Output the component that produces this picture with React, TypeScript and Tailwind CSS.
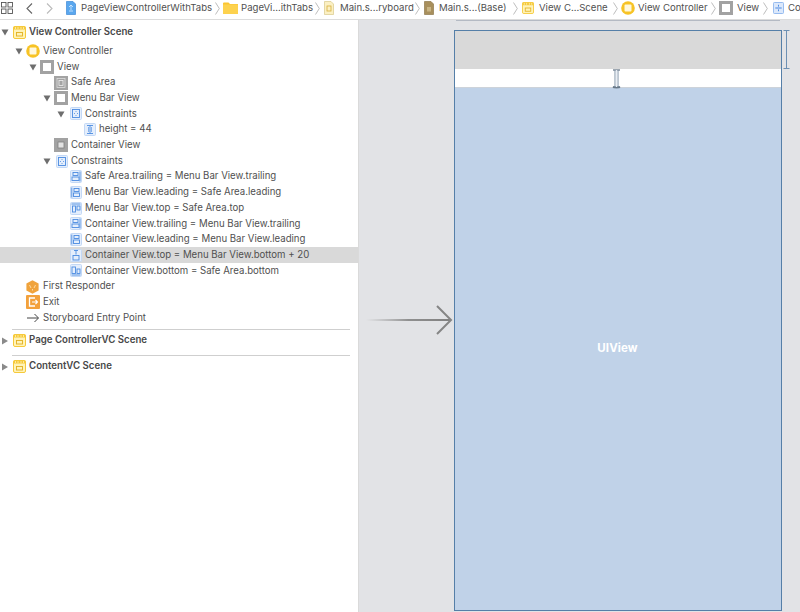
import React from "react";

const Tri = ({ open }: { open: boolean }) => (
  <svg width="8" height="8" viewBox="0 0 8 8" className="shrink-0">
    {open ? <path d="M0.5 1.5H7.5L4 7.5Z" fill="#6e6e6e" /> : <path d="M1 0.5V7.5L7 4Z" fill="#8a8a8a" />}
  </svg>
);

const SceneIcon = ({ s = 13 }: { s?: number }) => (
  <svg width={s} height={s} viewBox="0 0 13 13" className="shrink-0">
    <rect x="0.5" y="0.5" width="12" height="12" rx="1.5" fill="#fff3b8" stroke="#f6c93a" />
    <rect x="0.5" y="0.5" width="12" height="3" fill="#f6c93a" />
    <path d="M2.5 1v2M5 1v2M8 1v2M10.5 1v2" stroke="#fff3b8" strokeWidth="0.8" />
    <rect x="3.5" y="6.5" width="6" height="3.5" fill="none" stroke="#e2b021" strokeWidth="0.9" />
  </svg>
);
const VCIcon = ({ s = 14 }: { s?: number }) => (
  <svg width={s} height={s} viewBox="0 0 14 14" className="shrink-0">
    <circle cx="7" cy="7" r="6.8" fill="#f7c325" />
    <rect x="3.5" y="3.5" width="7" height="7" rx="1" fill="#fff8dc" />
  </svg>
);
const ViewIcon = ({ s = 14, small = false }: { s?: number; small?: boolean }) => (
  <svg width={s} height={s} viewBox="0 0 14 14" className="shrink-0">
    <rect width="14" height="14" fill="#a2a2a2" />
    {small ? (
      <rect x="4" y="4" width="6" height="6" fill="#e2e2e2" stroke="#808080" strokeWidth="0.8" />
    ) : (
      <rect x="3" y="3" width="8" height="8" fill="#ffffff" />
    )}
  </svg>
);
const SafeIcon = () => (
  <svg width="14" height="14" viewBox="0 0 14 14" className="shrink-0">
    <rect width="14" height="14" fill="#a3a3a3" />
    <rect x="3" y="2.5" width="8" height="9" fill="none" stroke="#dddddd" strokeWidth="0.8" />
    <rect x="5" y="4.5" width="4" height="5" fill="none" stroke="#eeeeee" strokeWidth="0.8" />
  </svg>
);
const Box = ({ children }: { children: React.ReactNode }) => (
  <svg width="12" height="13" viewBox="0 0 12 13" className="ml-[1.5px] shrink-0">
    <rect x="0.5" y="0.5" width="11" height="12" rx="1" fill="#e4eefc" stroke="#c3d8f5" />
    <g stroke="#4a8ae0" fill="none" strokeWidth="0.9">{children}</g>
  </svg>
);
const GroupIcon = () => (
  <Box>
    <rect x="2.5" y="2.5" width="7" height="8" />
    <path d="M6 4v1M6 8v1M4 6.5h1M7 6.5h1" strokeWidth="0.8" />
  </Box>
);
const HeightIcon = () => (
  <Box>
    <path d="M3 2.5h6M3 10.5h6M6 2.5v8" />
    <path d="M4.5 4v5M7.5 4v5" strokeWidth="0.6" />
  </Box>
);
const TrailIcon = () => (
  <Box>
    <rect x="3" y="2.5" width="5" height="3" />
    <rect x="2" y="7" width="7" height="3.5" />
    <path d="M10 1.5v10" />
  </Box>
);
const LeadIcon = () => (
  <Box>
    <path d="M1.8 1.5v10" />
    <rect x="4" y="2.5" width="5" height="3" />
    <rect x="3.5" y="7" width="6" height="3.5" />
  </Box>
);
const TopIcon = () => (
  <Box>
    <path d="M1.5 2h9" />
    <rect x="2.5" y="4" width="3" height="6" />
    <rect x="7" y="4" width="3" height="4" />
  </Box>
);
const VertIcon = () => (
  <Box>
    <path d="M4 1.5h4M6 1.5v4" />
    <rect x="3" y="6.5" width="6" height="4.5" />
  </Box>
);
const BottomIcon = () => (
  <Box>
    <path d="M1.5 11h9" />
    <rect x="2" y="3" width="3.5" height="6.5" />
    <rect x="7" y="5" width="3" height="4.5" />
  </Box>
);
const ResponderIcon = () => (
  <svg width="13" height="14" viewBox="0 0 13 14" className="shrink-0">
    <path d="M6.5 0.3L12.6 3.6V10.4L6.5 13.7L0.4 10.4V3.6Z" fill="#f0a33c" />
    <path d="M3.5 5l1.5 3M9.5 5L8 8M6.5 9v1.5" stroke="#ffe0ae" strokeWidth="0.9" fill="none" />
  </svg>
);
const ExitIcon = () => (
  <svg width="14" height="14" viewBox="0 0 14 14" className="shrink-0">
    <rect width="14" height="14" rx="1" fill="#f3a13c" />
    <path d="M9 3H3.5v8H9" stroke="#fff" strokeWidth="1.3" fill="none" />
    <path d="M6 7h5M9.5 5l2 2-2 2" stroke="#fff" strokeWidth="1.1" fill="none" />
  </svg>
);
const EntryIcon = () => (
  <svg width="12" height="10" viewBox="0 0 12 10" className="ml-[1px] shrink-0">
    <path d="M0 5h11.2M7.5 1l4 4-4 4" stroke="#444" strokeWidth="1" fill="none" />
  </svg>
);

type RowDef = { level: number; open?: boolean; icon: React.ReactNode; text: string; selected?: boolean };

const rows: RowDef[] = [
  { level: 1, open: true, icon: <VCIcon />, text: "View Controller" },
  { level: 2, open: true, icon: <ViewIcon />, text: "View" },
  { level: 3, icon: <SafeIcon />, text: "Safe Area" },
  { level: 3, open: true, icon: <ViewIcon />, text: "Menu Bar View" },
  { level: 4, open: true, icon: <GroupIcon />, text: "Constraints" },
  { level: 5, icon: <HeightIcon />, text: "height = 44" },
  { level: 3, icon: <ViewIcon small />, text: "Container View" },
  { level: 3, open: true, icon: <GroupIcon />, text: "Constraints" },
  { level: 4, icon: <TrailIcon />, text: "Safe Area.trailing = Menu Bar View.trailing" },
  { level: 4, icon: <LeadIcon />, text: "Menu Bar View.leading = Safe Area.leading" },
  { level: 4, icon: <TopIcon />, text: "Menu Bar View.top = Safe Area.top" },
  { level: 4, icon: <TrailIcon />, text: "Container View.trailing = Menu Bar View.trailing" },
  { level: 4, icon: <LeadIcon />, text: "Container View.leading = Menu Bar View.leading" },
  { level: 4, icon: <VertIcon />, text: "Container View.top = Menu Bar View.bottom + 20", selected: true },
  { level: 4, icon: <BottomIcon />, text: "Container View.bottom = Safe Area.bottom" },
  { level: 1, icon: <ResponderIcon />, text: "First Responder" },
  { level: 1, icon: <ExitIcon />, text: "Exit" },
  { level: 1, icon: <EntryIcon />, text: "Storyboard Entry Point" },
];

const Row = ({ r }: { r: RowDef }) => (
  <div
    className={`flex h-[15.7px] items-center ${r.selected ? "bg-[#d9d9d9]" : ""}`}
    style={{ paddingLeft: 14 * r.level + 1 }}
  >
    <span className="flex w-[11px] shrink-0">{r.open !== undefined && <Tri open={r.open} />}</span>
    <span className="flex w-[17px] shrink-0">{r.icon}</span>
    <span className="whitespace-nowrap text-[9.65px] text-[#505050]">{r.text}</span>
  </div>
);

const SceneRow = ({ text, open }: { text: string; open?: boolean }) => (
  <div className="flex h-[16px] items-center pl-[1px]">
    <span className="flex w-[12px] shrink-0"><Tri open={!!open} /></span>
    <span className="flex w-[16px] shrink-0"><SceneIcon /></span>
    <span className="whitespace-nowrap text-[9.7px] font-semibold text-[#484848]">{text}</span>
  </div>
);

const Chev = ({ ml, mr }: { ml: string; mr: string }) => (
  <svg width="5" height="13" viewBox="0 0 5 13" className={`shrink-0 ${ml} ${mr}`}>
    <path d="M0.5 0.5L4.3 6.5L0.5 12.5" stroke="#b5b5b5" strokeWidth="0.9" fill="none" />
  </svg>
);

const Crumb = ({ w, children }: { w: string; children: string }) => (
  <span className={`shrink-0 whitespace-nowrap text-[9.6px] text-[#505050] ${w}`}>{children}</span>
);

const TopBar = () => (
  <div className="flex h-[20px] items-center overflow-hidden border-b border-[#dcdcdc] bg-white pb-[3px] pl-[1px]">
    <svg width="12" height="12" viewBox="0 0 12 12" className="shrink-0">
      <g fill="none" stroke="#555" strokeWidth="0.9">
        <rect x="0.5" y="0.5" width="4.5" height="4.5" />
        <rect x="7" y="0.5" width="4.5" height="4.5" />
        <rect x="0.5" y="7" width="4.5" height="4.5" />
        <rect x="7" y="7" width="4.5" height="4.5" />
      </g>
    </svg>
    <svg width="7" height="11" viewBox="0 0 7 11" className="ml-[13px] shrink-0">
      <path d="M6 0.5L1 5.5L6 10.5" stroke="#666" strokeWidth="1.1" fill="none" />
    </svg>
    <svg width="7" height="11" viewBox="0 0 7 11" className="ml-[13px] shrink-0">
      <path d="M1 0.5L6 5.5L1 10.5" stroke="#bbb" strokeWidth="1.1" fill="none" />
    </svg>
    <svg width="10" height="14" viewBox="0 0 10 14" className="ml-[13px] shrink-0">
      <path d="M0.5 0.5H7L9.5 3V13.5H0.5Z" fill="#5aa7ee" stroke="#3f8ad8" strokeWidth="0.7" />
      <path d="M3 6l2-2 2 2M5 4v5M3 10h4" stroke="#d8ecff" strokeWidth="0.8" fill="none" />
    </svg>
    <Crumb w="ml-[5px] w-[131px]">PageViewControllerWithTabs</Crumb>
    <Chev ml="ml-[3px]" mr="mr-[3px]" />
    <svg width="15" height="12" viewBox="0 0 15 12" className="shrink-0">
      <path d="M0 1.5A1 1 0 0 1 1 0.5H5.5L7 2H15V12H0Z" fill="#fbc531" />
      <rect y="2.5" width="15" height="9.5" fill="#fdd24e" />
    </svg>
    <Crumb w="ml-[3px] w-[71px]">PageVi...ithTabs</Crumb>
    <Chev ml="ml-[3px]" mr="mr-[4px]" />
    <svg width="10" height="14" viewBox="0 0 10 14" className="shrink-0">
      <path d="M0.5 0.5H7L9.5 3V13.5H0.5Z" fill="#fbf0c4" stroke="#d9c88a" strokeWidth="0.7" />
      <rect x="3" y="5" width="4" height="5" fill="none" stroke="#d6ae3c" strokeWidth="0.8" />
    </svg>
    <Crumb w="ml-[6px] w-[72px]">Main.s...ryboard</Crumb>
    <Chev ml="ml-[3px]" mr="mr-[4px]" />
    <svg width="10" height="14" viewBox="0 0 10 14" className="shrink-0">
      <path d="M0.5 0.5H7L9.5 3V13.5H0.5Z" fill="#a88f5c" stroke="#8f7a4d" strokeWidth="0.7" />
      <rect x="3" y="6" width="4" height="4.5" fill="#c9b585" />
    </svg>
    <Crumb w="ml-[5px] w-[67px]">Main.s...(Base)</Crumb>
    <Chev ml="ml-[7px]" mr="mr-[4px]" />
    <SceneIcon s={12} />
    <Crumb w="ml-[5px] w-[67px]">View C...Scene</Crumb>
    <Chev ml="ml-[7px]" mr="mr-[3px]" />
    <VCIcon s={14} />
    <Crumb w="ml-[3px] w-[70px]">View Controller</Crumb>
    <Chev ml="ml-[3px]" mr="mr-[3px]" />
    <ViewIcon s={14} />
    <Crumb w="ml-[4px] w-[22px]">View</Crumb>
    <Chev ml="ml-[4px]" mr="mr-[5px]" />
    <svg width="11" height="12" viewBox="0 0 12 13" className="shrink-0">
      <rect x="0.5" y="0.5" width="11" height="12" rx="1" fill="#dbe8fb" stroke="#8db6ee" />
      <path d="M2.5 6.5h7M6 3v2M6 8v2" stroke="#3f82de" fill="none" />
    </svg>
    <Crumb w="ml-[4px] w-[20px]">Con</Crumb>
  </div>
);

export default function App() {
  return (
    <div className="flex h-[612px] w-[800px] flex-col overflow-hidden bg-white font-['Inter',sans-serif]">
      <TopBar />
      <div className="flex min-h-0 flex-1">
        <aside className="w-[359px] shrink-0 border-r border-[#dadada] bg-white pt-[4px]">
          <SceneRow text="View Controller Scene" open />
          <div className="mt-[3.4px]">
            {rows.map((r, i) => (
              <Row key={i} r={r} />
            ))}
          </div>
          <div className="ml-[12px] mr-[8px] mt-[3px] border-t border-[#cfcfcf]" />
          <div className="mt-[3px]"><SceneRow text="Page ControllerVC Scene" /></div>
          <div className="ml-[12px] mr-[8px] mt-[6px] border-t border-[#cfcfcf]" />
          <div className="mt-[3px]"><SceneRow text="ContentVC Scene" /></div>
        </aside>
        <main className="relative min-w-0 flex-1 bg-[#e2e3e6] pl-[95px] pt-[10px]">
          <div className="absolute left-[97px] top-0 h-px w-[324px] bg-[#b4bac4]" />
          <div className="flex h-[581px] w-[328px] flex-col border border-[#557fa8]">
            <div className="h-[38px] bg-[#d9d9d9]" />
            <div className="h-[19px] border-b border-[#cdd3da] bg-white" />
            <div className="flex flex-1 items-center justify-center bg-[#c0d2e8] pr-[1px]">
              <span className="text-[11.5px] font-bold tracking-[0.1px] text-white">UIView</span>
            </div>
          </div>
          <svg width="90" height="34" viewBox="0 0 90 34" className="absolute left-[7px] top-[283px]">
            <defs>
              <linearGradient id="shaft" x1="0" x2="1" y1="0" y2="0">
                <stop offset="0" stopColor="#a0a0a0" stopOpacity="0" />
                <stop offset="0.5" stopColor="#8f8f8f" />
                <stop offset="1" stopColor="#808080" />
              </linearGradient>
            </defs>
            <rect x="0" y="16" width="85" height="2" fill="url(#shaft)" />
            <path d="M71 3L85 17L71 31" stroke="#858585" strokeWidth="2" fill="none" />
          </svg>
          <svg width="7" height="40" viewBox="0 0 7 40" className="absolute left-[424px] top-[10px]">
            <path d="M0.5 0.5H6.5M3.5 0.5V38.5M0.5 38.5H6.5" stroke="#6d90b3" strokeWidth="1" fill="none" />
          </svg>
          <svg width="9" height="20" viewBox="0 0 9 20" className="absolute left-[253px] top-[49px]">
            <ellipse cx="4.5" cy="18.3" rx="4" ry="1.4" fill="#5f6f80" opacity="0.55" />
            <path d="M1 1H8M1 18H8" stroke="#3f5266" strokeWidth="1.2" fill="none" />
            <path d="M3 1V18M6 1V18" stroke="#7d90a5" strokeWidth="1" fill="none" />
            <path d="M4.5 1V18" stroke="#e9eef5" strokeWidth="1.4" />
          </svg>
        </main>
      </div>
    </div>
  );
}
